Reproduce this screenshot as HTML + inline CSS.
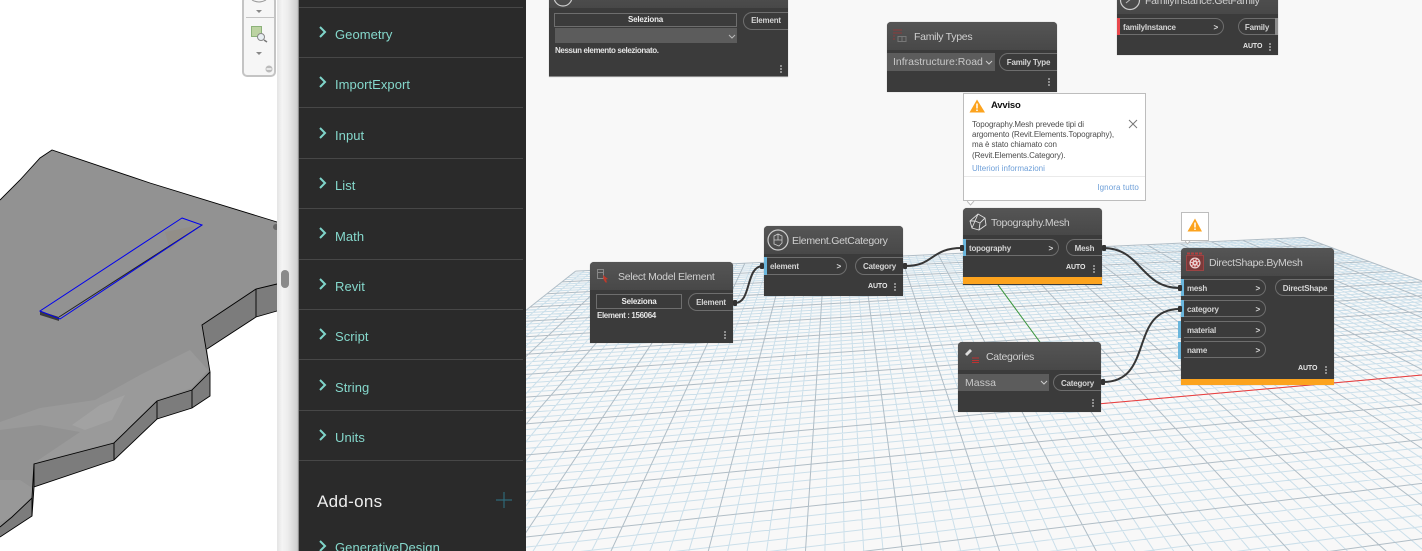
<!DOCTYPE html>
<html><head><meta charset="utf-8">
<style>
*{box-sizing:border-box}
html,body{margin:0;padding:0;width:1422px;height:551px;overflow:hidden;background:#fff;font-family:"Liberation Sans",sans-serif}
.a{position:absolute}
#root{position:relative;width:1422px;height:551px;overflow:hidden}
.row{position:absolute;left:335px;color:#85d8cc;font-size:13px;line-height:16px;letter-spacing:.05px;white-space:nowrap}
.sep{position:absolute;left:299px;width:224px;height:1px;background:#474747}
.node{position:absolute;background:#3b3b3b;border-radius:4px 4px 0 0;box-shadow:0 0 1px rgba(0,0,0,.3)}
.head{position:absolute;left:0;top:0;right:0;background:linear-gradient(#555,#484848);border-radius:4px 4px 0 0}
.title{position:absolute;color:#cfcfcf;font-size:10.500px;line-height:14px;white-space:nowrap;letter-spacing:-.28px}
.pill{position:absolute;border:1px solid #6e6e6e;color:#d4d4d4;font-size:8px;font-weight:bold;line-height:17px;letter-spacing:-.2px;white-space:nowrap;text-align:center}
.pin{border-radius:0 9px 9px 0;border-left:none;text-align:left;padding-left:3px}
.pout{border-radius:9px 0 0 9px;border-right:none}
.gt{position:absolute;right:5px;top:0;color:#ddd;font-weight:bold}
.tag{position:absolute;width:3px;background:#6ab6dc}
.auto{position:absolute;color:#e8e8e8;font-size:7px;font-weight:bold;line-height:10px;letter-spacing:-.1px}
.dots{position:absolute;width:2px;height:8px;background:radial-gradient(circle at 1px 1px,#aaa 1px,transparent 1px) 0 0/2px 3px}
.txt{position:absolute;color:#e4e4e4;font-size:8px;font-weight:bold;white-space:nowrap;line-height:10px;letter-spacing:-.38px}
.btn{position:absolute;border:1px solid #6e6e6e;color:#eee;font-size:8px;font-weight:bold;text-align:center;line-height:12px;letter-spacing:-.2px}
.dd{position:absolute;background:#5c5c5c;color:#c8c8c8;white-space:nowrap}
.band{position:absolute;left:0;right:0;background:#fca31e}
.w{position:absolute;color:#4c4c4c;font-size:8px;line-height:10px;white-space:nowrap;letter-spacing:-.1px}
</style></head><body>
<div id="root">

<!-- Revit terrain -->
<svg class="a" style="left:0;top:0" width="278" height="551" viewBox="0 0 278 551">
<polygon points="277,284 256,289 202,325 210,372 192,390 157,401 114,443 34,464 32,498 12,517 0,527 0,537 32,516 34,487 114,460 157,419 192,408 210,396 210,372 207,349 256,317 277,311" fill="#7c7c7c"/>
<polygon points="0,200 20,180 40,158 52,150 150,183 277,222 277,284 256,289 202,325 210,372 192,390 157,401 114,443 34,464 32,498 12,517 0,527" fill="#929292"/>
<polygon points="0,422 40,408 95,400 140,375 190,350 208,370 192,388 157,400 114,442 34,463 80,432 40,425 0,430" fill="#9a9a9a"/>
<polygon points="72,425 100,405 125,395 112,420 85,430" fill="#a2a2a2"/>
<polygon points="0,480 20,480 32,488 32,498 12,517 0,522" fill="#989898"/>
<polygon points="170,250 195,226 165,232" fill="#928e88"/>
<g fill="none" stroke="#000" stroke-width=".9">
<polyline points="0,200 20,180 40,158 52,150 150,183 277,222"/>
<polyline points="277,284 256,289 202,325 210,372 192,390 157,401 114,443 34,464 32,498 12,517 0,527"/>
<polyline points="277,311 256,317 207,349"/>
<polyline points="210,372 210,396 192,408 157,419 114,460 34,487 32,516 0,537"/>
<path d="M256,289V317M192,390V408M157,401V419M114,443V460M34,464V487M32,498V516"/>
</g>
<polygon points="40,311 59,317 59,321 40,315" fill="#3c3c3c"/>
<polyline points="59,317 202,225" fill="none" stroke="#222" stroke-width="1"/>
<polygon points="182,218 202,225 60,319 40,311" fill="none" stroke="#0000f0" stroke-width="1"/>
<circle cx="276" cy="227" r="3" fill="#666"/>
</svg>

<!-- view toolbar -->
<div class="a" style="left:242px;top:-4px;width:34px;height:81px;background:#f6f6f6;border:2px solid #c4c4c4;border-radius:5px"></div>
<svg class="a" style="left:242px;top:0" width="36" height="78" viewBox="0 0 36 78">
<path d="M10,0Q17,4 24,0" fill="none" stroke="#999"/>
<path d="M14,10h6l-3,3z" fill="#888"/>
<path d="M4,17.500h28" stroke="#c4c4c4"/>
<rect x="9.500" y="26.500" width="10" height="10" fill="#bcd3a2" stroke="#8cb27a"/>
<circle cx="19" cy="37" r="3.500" fill="#e8eef2" stroke="#888"/>
<path d="M22,40l3,2" stroke="#777" stroke-width="1.500"/>
<path d="M14,52h6l-3,3z" fill="#888"/>
<circle cx="27" cy="69" r="3.500" fill="#bbb"/>
<path d="M24.500,69h5" stroke="#f6f6f6" stroke-width="1.500"/>
</svg>

<!-- splitter -->
<div class="a" style="left:277px;top:0;width:21px;height:551px;background:linear-gradient(90deg,#e4e4e4 0,#f4f4f4 25%,#ededed 50%,#cfcfcf 95%,#bbb 100%)"></div>
<div class="a" style="left:281px;top:270px;width:8px;height:18px;background:#8a8a8a;border-radius:4px"></div>

<!-- library -->
<div class="a" style="left:298px;top:0;width:228px;height:551px;background:#2a2a2a;border-left:1px solid #8c8c8c"></div>
<div class="sep" style="top:7px"></div><div class="sep" style="top:57px"></div><div class="sep" style="top:107px"></div><div class="sep" style="top:158px"></div><div class="sep" style="top:208px"></div><div class="sep" style="top:259px"></div><div class="sep" style="top:309px"></div><div class="sep" style="top:359px"></div><div class="sep" style="top:410px"></div><div class="sep" style="top:460px"></div>
<svg class="a" style="left:318px;top:0" width="12" height="551" viewBox="0 0 12 551" fill="none" stroke="#7fd5ca" stroke-width="2">
<path d="M2,27l5,5-5,5M2,77l5,5-5,5M2,128l5,5-5,5M2,178l5,5-5,5M2,228l5,5-5,5M2,279l5,5-5,5M2,329l5,5-5,5M2,380l5,5-5,5M2,430l5,5-5,5M2,541l5,5-5,5"/>
</svg>
<div class="row" style="top:27px">Geometry</div>
<div class="row" style="top:77px">ImportExport</div>
<div class="row" style="top:128px">Input</div>
<div class="row" style="top:178px">List</div>
<div class="row" style="top:229px">Math</div>
<div class="row" style="top:279px">Revit</div>
<div class="row" style="top:329px">Script</div>
<div class="row" style="top:380px">String</div>
<div class="row" style="top:430px">Units</div>
<div class="row" style="top:540px;height:11px;overflow:hidden">GenerativeDesign</div>
<div class="a" style="left:317px;top:492px;color:#eee;font-size:17px;line-height:20px;letter-spacing:.3px">Add-ons</div>
<svg class="a" style="left:495px;top:491px" width="18" height="18"><path d="M1,9h16M9,1v16" stroke="#2f6878" stroke-width="1.200"/></svg>

<!-- canvas -->
<svg id="grid" class="a" style="left:526px;top:0;background:#f8f8f8" width="896" height="551" viewBox="526 0 896 551">
</svg>
<script>
(function(){
var O=[1086,405],Vx=[4760,77],Vy=[837,65],a=.01727,b=.0812;
function P(u,v){var w=1+u*a+v*b;return[(O[0]+u*a*Vx[0]+v*b*Vy[0])/w,(O[1]+u*a*Vx[1]+v*b*Vy[1])/w];}
var vmin=-6,i,p,q,major,mn='',mj='';
for(i=-50;i<=50;i++){
 major=i%5===0;
 var c=i/5;
 p=P(c,10);q=P(c,vmin);
 var l='M'+p[0].toFixed(1)+','+p[1].toFixed(1)+'L'+q[0].toFixed(1)+','+q[1].toFixed(1);
 if(major)mj+=l;else mn+=l;
}
for(i=-30;i<=50;i++){
 major=i%5===0;
 var c2=i/5;
 p=P(-10,c2);q=P(10,c2);
 var l2='M'+p[0].toFixed(1)+','+p[1].toFixed(1)+'L'+q[0].toFixed(1)+','+q[1].toFixed(1);
 if(major)mj+=l2;else mn+=l2;
}
var g=document.getElementById('grid');
var A=P(0,10),D=P(10,0);
g.innerHTML='<path d="'+mn+'" fill="none" stroke="#cbdfea" stroke-width="1"/>'+
'<path d="'+mj+'" fill="none" stroke="#b0bdc6" stroke-width="1"/>'+
'<path d="M'+A+'L'+O+'" fill="none" stroke="#3f9a3f" stroke-width="1"/>'+
'<path d="M'+O+'L'+D+'" fill="none" stroke="#ee3c3c" stroke-width="1"/>';
})();
</script>

<!-- wires -->
<svg class="a" style="left:526px;top:0" width="896" height="551" viewBox="526 0 896 551" fill="none" stroke="#363636" stroke-width="2">
<path d="M735,303C752,303 745,266 763,266"/>
<path d="M905,266C935,266 930,248 962,248"/>
<path d="M1103,248C1142,248 1140,288 1180,288"/>
<path d="M1103,382C1155,382 1128,309 1180,309"/>
</svg>

<!-- Select top node -->
<div class="node" style="left:549px;top:-20px;width:239px;height:97px;border-bottom:1px solid #888">
 <div class="head" style="height:28px"></div>
</div>
<svg class="a" style="left:550px;top:0" width="26" height="8"><circle cx="13" cy="-3" r="9" fill="none" stroke="#ccc" stroke-width="1.200"/></svg>
<div class="btn" style="left:554px;top:13px;width:183px;height:14px">Seleziona</div>
<div class="dd" style="left:555px;top:28px;width:182px;height:15px"></div>
<svg class="a" style="left:728px;top:34px" width="8" height="6"><path d="M1,1l3,3 3-3" fill="none" stroke="#bbb"/></svg>
<div class="txt" style="left:555px;top:46px">Nessun elemento selezionato.</div>
<div class="pill pout" style="left:743px;top:12px;width:45px;height:18px;line-height:16px">Element</div>
<div class="dots" style="left:780px;top:65px"></div>

<!-- Family Types -->
<div class="node" style="left:887px;top:22px;width:170px;height:70px"><div class="head" style="height:28px"></div></div>
<svg class="a" style="left:892px;top:29px" width="16" height="15" fill="none" stroke="#8d3a3a"><path d="M1,1h9M1,4h9M1,7h2M1,10h2"/><path d="M6,7.500h8v5h-8zM10,7.500v5" stroke="#777"/></svg>
<div class="title" style="left:914px;top:30px">Family Types</div>
<div class="dd" style="left:887px;top:53px;width:108px;height:18px;font-size:10.500px;line-height:19px;padding-left:6px">Infrastructure:Road</div>
<svg class="a" style="left:985px;top:60px" width="8" height="6"><path d="M1,1l3,3 3-3" fill="none" stroke="#ccc"/></svg>
<div class="pill pout" style="left:999px;top:53px;width:58px;height:18px">Family Type</div>
<div class="dots" style="left:1048px;top:78px"></div>

<!-- FamilyInstance.GetFamily -->
<div class="node" style="left:1117px;top:-20px;width:161px;height:75px;border-radius:0"><div class="head" style="height:34px;border-radius:0"></div></div>
<svg class="a" style="left:1119px;top:0" width="22" height="11"><circle cx="11" cy="0" r="9.500" fill="none" stroke="#ccc" stroke-width="1.200"/><path d="M7,3l6-5" stroke="#bbb"/></svg>
<div class="title" style="left:1145px;top:-6px">FamilyInstance.GetFamily</div>
<div class="a" style="left:1117px;top:18px;width:3px;height:17px;background:#e8484d"></div>
<div class="pill pin" style="left:1120px;top:18px;width:104px;height:17px">familyInstance<span class="gt">&gt;</span></div>
<div class="pill pout" style="left:1238px;top:18px;width:37px;height:17px">Family</div>
<div class="a" style="left:1275px;top:18px;width:3px;height:17px;background:#8c8c8c"></div>
<div class="auto" style="left:1243px;top:42px">AUTO</div>
<div class="dots" style="left:1269px;top:43px"></div>

<!-- Warning popup -->
<div class="a" style="left:963px;top:93px;width:183px;height:108px;background:#fff;border:1px solid #bdbdbd"></div>
<svg class="a" style="left:967px;top:201px" width="8" height="5"><path d="M0,0l3.500,4 3.500-4" fill="#fff" stroke="#bdbdbd"/></svg>
<svg class="a" style="left:969px;top:99px" width="17" height="14"><path d="M8,0.500L16,13.500H0.500z" fill="#fca31e"/><path d="M8,4.500v5M8,10.500v1.500" stroke="#fff" stroke-width="1.500"/></svg>
<div class="a" style="left:991px;top:100px;color:#111;font-size:9.500px;font-weight:bold;line-height:12px;letter-spacing:-.2px">Avviso</div>
<div class="w" style="left:972px;top:120px">Topography.Mesh prevede tipi di</div>
<div class="w" style="left:972px;top:130px">argomento (Revit.Elements.Topography),</div>
<div class="w" style="left:972px;top:140px">ma è stato chiamato con</div>
<div class="w" style="left:972px;top:151px">(Revit.Elements.Category).</div>
<div class="w" style="left:972px;top:164px;color:#6e9fd8;letter-spacing:0">Ulteriori informazioni</div>
<div class="a" style="left:964px;top:176px;width:181px;height:1px;background:#eaeaea"></div>
<div class="w" style="right:283px;top:183px;color:#6e9fd8;letter-spacing:.1px">Ignora tutto</div>
<svg class="a" style="left:1128px;top:119px" width="10" height="10"><path d="M1,1l8,8M9,1l-8,8" stroke="#777" fill="none"/></svg>

<!-- Select Model Element -->
<div class="node" style="left:590px;top:262px;width:143px;height:81px;border-radius:4px 4px 0 0"><div class="head" style="height:28px"></div></div>
<svg class="a" style="left:596px;top:268px" width="16" height="15"><rect x="1.500" y="1.500" width="6" height="9" fill="none" stroke="#888"/><path d="M2,4.500h5" stroke="#888"/><path d="M7,7l5,4-2,.500 1,3-1.500,0-2-3z" fill="#c0392b"/></svg>
<div class="title" style="left:618px;top:270px">Select Model Element</div>
<div class="btn" style="left:596px;top:294px;width:86px;height:15px;line-height:13px">Seleziona</div>
<div class="pill pout" style="left:688px;top:293px;width:45px;height:18px">Element</div>
<div class="txt" style="left:597px;top:311px">Element : 156064</div>
<div class="dots" style="left:724px;top:331px"></div>
<svg class="a" style="left:733px;top:300px" width="4" height="6"><rect width="4" height="6" rx="1" fill="#333"/></svg>

<!-- Element.GetCategory -->
<div class="node" style="left:764px;top:226px;width:139px;height:70px"><div class="head" style="height:28px"></div></div>
<svg class="a" style="left:766px;top:228px" width="24" height="24" fill="none" stroke="#ccc"><circle cx="12" cy="12" r="10" stroke-width="1.200"/><path d="M8,8l4-2 4,2v7l-3,3-5-2zM12,6v6M8,12h8" stroke-width=".8"/></svg>
<div class="title" style="left:792px;top:234px">Element.GetCategory</div>
<div class="tag" style="left:764px;top:257px;height:18px"></div>
<div class="pill pin" style="left:767px;top:257px;width:80px;height:18px">element<span class="gt">&gt;</span></div>
<div class="pill pout" style="left:855px;top:257px;width:48px;height:18px">Category</div>
<div class="auto" style="left:868px;top:282px">AUTO</div>
<div class="dots" style="left:894px;top:283px"></div>
<svg class="a" style="left:903px;top:263px" width="5" height="6"><rect width="4" height="6" rx="1" fill="#333"/></svg>
<svg class="a" style="left:760px;top:263px" width="4" height="6"><rect width="4" height="6" rx="1" fill="#333"/></svg>

<!-- Topography.Mesh -->
<div class="node" style="left:963px;top:208px;width:139px;height:77px"><div class="head" style="height:27px"></div><div class="band" style="top:69px;height:7px"></div></div>
<svg class="a" style="left:969px;top:213px" width="18" height="18" fill="none" stroke="#ddd" stroke-width=".9"><path d="M9,1L16,5 17,12 10,17 3,15 1,8zM9,1L6,8 1,8M6,8L11,10 16,5M11,10L10,17M6,8L3,15"/></svg>
<div class="title" style="left:991px;top:216px">Topography.Mesh</div>
<div class="tag" style="left:963px;top:239px;height:17px"></div>
<div class="pill pin" style="left:966px;top:239px;width:93px;height:17px">topography<span class="gt">&gt;</span></div>
<div class="pill pout" style="left:1066px;top:239px;width:36px;height:17px">Mesh</div>
<div class="auto" style="left:1066px;top:263px">AUTO</div>
<div class="dots" style="left:1093px;top:265px"></div>
<svg class="a" style="left:960px;top:245px" width="4" height="6"><rect width="4" height="6" rx="1" fill="#333"/></svg>
<svg class="a" style="left:1102px;top:245px" width="4" height="6"><rect width="4" height="6" rx="1" fill="#333"/></svg>

<!-- Categories -->
<div class="node" style="left:958px;top:342px;width:143px;height:70px"><div class="head" style="height:28px"></div></div>
<svg class="a" style="left:964px;top:348px" width="16" height="15"><path d="M1,6l5-5 2,2-5,5z" fill="#ddd"/><path d="M8,10h7M8,12.500h7M8,14.500h7" stroke="#b33" fill="none"/></svg>
<div class="title" style="left:986px;top:350px">Categories</div>
<div class="dd" style="left:958px;top:374px;width:91px;height:17px;font-size:10.500px;line-height:18px;padding-left:7px">Massa</div>
<svg class="a" style="left:1040px;top:380px" width="8" height="6"><path d="M1,1l3,3 3-3" fill="none" stroke="#ccc"/></svg>
<div class="pill pout" style="left:1053px;top:374px;width:48px;height:17px">Category</div>
<div class="dots" style="left:1092px;top:399px"></div>
<svg class="a" style="left:1101px;top:379px" width="4" height="6"><rect width="4" height="6" rx="1" fill="#333"/></svg>

<!-- Warning bubble -->
<div class="a" style="left:1181px;top:212px;width:28px;height:29px;background:#fff;border:1px solid #bdbdbd"></div>
<svg class="a" style="left:1185px;top:241px" width="6" height="4"><path d="M0,0l2.500,3 2.500-3" fill="#fff" stroke="#bdbdbd"/></svg>
<svg class="a" style="left:1187px;top:218px" width="16" height="14"><path d="M8,0.500L15,13.500H0.500z" fill="#fca31e"/><path d="M8,4.500v5M8,10.500v1.500" stroke="#fff" stroke-width="1.500"/></svg>

<!-- DirectShape.ByMesh -->
<div class="node" style="left:1181px;top:248px;width:153px;height:137px"><div class="head" style="height:28px"></div><div class="band" style="top:131px;height:6px"></div></div>
<svg class="a" style="left:1186px;top:252px" width="18" height="20"><path d="M1,1.500h16" stroke="#b04040" stroke-width="2" stroke-dasharray="3 1"/><rect x="0.500" y="3.500" width="17" height="15" fill="#7a3a3a" stroke="#9c4444"/><circle cx="9" cy="11" r="5.500" fill="#e8d0d0"/><circle cx="9" cy="11" r="3.500" fill="none" stroke="#a33" stroke-width="1.500" stroke-dasharray="2 1"/><circle cx="9" cy="11" r="1" fill="#a33"/></svg>
<div class="title" style="left:1209px;top:256px">DirectShape.ByMesh</div>
<div class="tag" style="left:1181px;top:279px;height:17px"></div>
<div class="pill pin" style="left:1184px;top:279px;width:82px;height:17px">mesh<span class="gt">&gt;</span></div>
<div class="pill pout" style="left:1275px;top:279px;width:59px;height:17px">DirectShape</div>
<div class="tag" style="left:1181px;top:300px;height:17px"></div>
<div class="pill pin" style="left:1184px;top:300px;width:82px;height:17px">category<span class="gt">&gt;</span></div>
<div class="tag" style="left:1178px;top:321px;height:17px"></div>
<div class="pill pin" style="left:1184px;top:321px;width:82px;height:17px">material<span class="gt">&gt;</span></div>
<div class="tag" style="left:1178px;top:342px;height:17px"></div>
<div class="pill pin" style="left:1184px;top:341px;width:82px;height:17px">name<span class="gt">&gt;</span></div>
<div class="auto" style="left:1298px;top:364px">AUTO</div>
<div class="dots" style="left:1325px;top:366px"></div>
<svg class="a" style="left:1178px;top:285px" width="4" height="28"><rect width="4" height="6" rx="1" fill="#333"/><rect y="21" width="4" height="6" rx="1" fill="#333"/></svg>

</div>
</body></html>
